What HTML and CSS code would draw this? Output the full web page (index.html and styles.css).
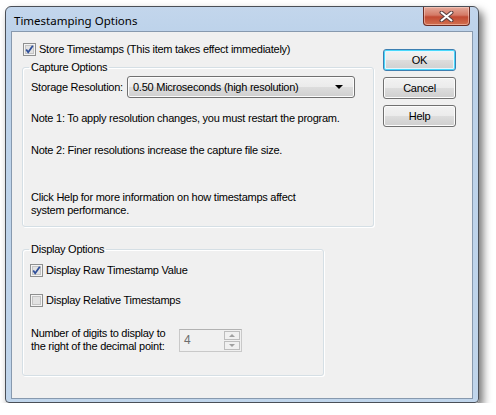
FILE: index.html
```html
<!DOCTYPE html>
<html lang="en">

<head>
    <meta charset="UTF-8">
    <meta name="viewport" content="width=device-width, initial-scale=1.0">
    <title>Timestamping Options</title>
    <link rel="stylesheet" href="styles.css">
</head>

<body>
    <div class="window">
        <div class="titlebar">
            <span class="title">Timestamping Options</span>
            <button class="close">
                <svg width="15" height="11" viewBox="0 0 15 11">
                    <path d="M2.5 1.5 L12.5 9.5 M12.5 1.5 L2.5 9.5" stroke="#5a4040" stroke-width="4" stroke-linecap="round" />
                    <path d="M2.5 1.5 L12.5 9.5 M12.5 1.5 L2.5 9.5" stroke="#ffffff" stroke-width="2" stroke-linecap="round" />
                </svg>
            </button>
        </div>
        <div class="client">
            <div class="main">
                <label class="check top-check">
                    <span class="box">
                        <svg width="13" height="13" viewBox="0 0 13 13">
                            <rect x="0.5" y="0.5" width="12" height="12" fill="#f4f4f4" stroke="#8e8f8f" />
                            <rect x="2.5" y="2.5" width="8" height="8" fill="#e2e2e2" stroke="#c4c4c4" />
                            <path d="M3.2 6.4 L5.2 9.2 L9.8 2.8" fill="none" stroke="#2f4f9a" stroke-width="1.8" />
                        </svg>
                    </span>
                    Store Timestamps (This item takes effect immediately)
                </label>

                <fieldset class="group capture">
                    <legend>Capture Options</legend>
                    <div class="row">
                        <span class="label">Storage Resolution:</span>
                        <div class="combo">
                            <span>0.50 Microseconds (high resolution)</span>
                            <span class="arrow"></span>
                        </div>
                    </div>
                    <p class="note1">Note 1: To apply resolution changes, you must restart the program.</p>
                    <p class="note2">Note 2: Finer resolutions increase the capture file size.</p>
                    <p class="note3">Click Help for more information on how timestamps affect<br>system performance.</p>
                </fieldset>

                <fieldset class="group display">
                    <legend>Display Options</legend>
                    <label class="check">
                        <span class="box">
                            <svg width="13" height="13" viewBox="0 0 13 13">
                                <rect x="0.5" y="0.5" width="12" height="12" fill="#f4f4f4" stroke="#8e8f8f" />
                                <rect x="2.5" y="2.5" width="8" height="8" fill="#e2e2e2" stroke="#c4c4c4" />
                                <path d="M3.2 6.4 L5.2 9.2 L9.8 2.8" fill="none" stroke="#2f4f9a" stroke-width="1.8" />
                            </svg>
                        </span>
                        Display Raw Timestamp Value
                    </label>
                    <label class="check second">
                        <span class="box">
                            <svg width="13" height="13" viewBox="0 0 13 13">
                                <rect x="0.5" y="0.5" width="12" height="12" fill="#f4f4f4" stroke="#8e8f8f" />
                                <rect x="2.5" y="2.5" width="8" height="8" fill="#e2e2e2" stroke="#c4c4c4" />
                            </svg>
                        </span>
                        Display Relative Timestamps
                    </label>
                    <div class="digits">
                        <p>Number of digits to display to<br>the right of the decimal point:</p>
                        <div class="spin">
                            <span class="value">4</span>
                            <div class="spin-buttons">
                                <span class="up"></span>
                                <span class="down"></span>
                            </div>
                        </div>
                    </div>
                </fieldset>
            </div>

            <div class="buttons">
                <button class="btn default">OK</button>
                <button class="btn">Cancel</button>
                <button class="btn">Help</button>
            </div>
        </div>
    </div>
</body>

</html>
```

FILE: styles.css
```css
* {
    padding: 0;
    margin: 0;
    box-sizing: border-box;
}

body {
    background: #ffffff;
    font-family: "Liberation Sans", Arial, sans-serif;
    font-size: 11px;
    line-height: 13px;
    letter-spacing: -0.25px;
    color: #000;
}

.window {
    width: 474px;
    height: 397px;
    margin: 6px 0 0 5px;
    border: 1px solid #4a4f57;
    border-radius: 6px 6px 4px 4px;
    background: linear-gradient(#c3d6ec, #bcd2ea 30px, #c0d5eb);
    padding: 0 5px 3px 5px;
    box-shadow: 4px 5px 9px rgba(0, 0, 0, 0.55);
    display: flex;
    flex-direction: column;
}

.titlebar {
    height: 24px;
    display: flex;
    justify-content: space-between;
    align-items: flex-start;
}

.title {
    font-family: "Noto Sans", sans-serif;
    font-size: 11.5px;
    letter-spacing: 0;
    line-height: 16px;
    margin: 6px 0 0 3px;
}

.close {
    width: 47px;
    height: 19px;
    margin-right: 3px;
    border: 1px solid #6b2c24;
    border-top: none;
    border-radius: 0 0 4px 4px;
    background: linear-gradient(#e5a99a, #d47a66 45%, #c24a33 55%, #d2704f);
    box-shadow: inset 0 0 0 1px rgba(255, 220, 210, 0.5);
    display: flex;
    align-items: center;
    justify-content: center;
}

.client {
    flex: 1;
    border: 1px solid #8799ae;
    background: #f0f0f0;
    display: flex;
    padding: 11px 0 0 10px;
}

.main {
    width: 352px;
}

.check {
    display: flex;
    align-items: center;
    height: 13px;
    gap: 3px;
}

.check .box {
    width: 13px;
    height: 13px;
    display: block;
}

.check .box svg {
    display: block;
}

.top-check {
    margin-left: 1px;
}

.group {
    border: 1px solid #d5dfe5;
    border-radius: 3px;
    padding: 0 8px;
    box-shadow: inset 1px 1px 0 #fff, 1px 1px 0 #fff;
}

.group legend {
    margin-left: -2px;
    padding: 0 2px;
}

.capture {
    margin-top: 5px;
    height: 166px;
    padding-top: 2px;
}

.row {
    display: flex;
    align-items: center;
    height: 22px;
}

.row .label {
    flex: 0 0 96px;
    white-space: nowrap;
}

.combo {
    width: 228px;
    height: 22px;
    border: 1px solid #707070;
    border-radius: 3px;
    background: linear-gradient(#f2f2f2, #ebebeb 50%, #dddddd 50%, #cfcfcf);
    box-shadow: inset 0 0 0 1px #fcfcfc;
    display: flex;
    align-items: center;
    justify-content: space-between;
    padding: 0 11px 0 5px;
}

.arrow {
    width: 0;
    height: 0;
    border-left: 4px solid transparent;
    border-right: 4px solid transparent;
    border-top: 4px solid #000;
}

.note1 {
    margin-top: 14px;
}

.note2 {
    margin-top: 19px;
}

.note3 {
    margin-top: 34px;
}

.display {
    width: 302px;
    height: 133px;
    margin-top: 16px;
    padding: 8px 8px 0 7px;
}

.display legend {
    margin-left: -1px;
}

.display .second {
    margin-top: 17px;
}

.digits {
    display: flex;
    align-items: center;
    margin-top: 20px;
    padding-left: 1px;
}

.digits p {
    width: 148px;
}

.spin {
    width: 63px;
    height: 23px;
    border: 1px solid #c9c9c9;
    border-top-color: #b2b2b2;
    background: #f0f0f0;
    display: flex;
    justify-content: space-between;
    padding: 1px;
}

.spin .value {
    color: #6d6d6d;
    font-size: 12px;
    padding: 3px 0 0 3px;
}

.spin-buttons {
    width: 16px;
    display: flex;
    flex-direction: column;
    gap: 1px;
}

.spin-buttons span {
    flex: 1;
    border: 1px solid #bdbdbd;
    background: #f0f0f0;
    display: flex;
    align-items: center;
    justify-content: center;
}

.spin-buttons span::after {
    content: "";
    border-left: 3px solid transparent;
    border-right: 3px solid transparent;
}

.spin-buttons .up::after {
    border-bottom: 3px solid #a0a0a0;
}

.spin-buttons .down::after {
    border-top: 3px solid #a0a0a0;
}

.buttons {
    margin-left: 9px;
    padding-top: 6px;
    display: flex;
    flex-direction: column;
    gap: 6px;
}

.btn {
    width: 73px;
    height: 22px;
    font-family: "Liberation Sans", Arial, sans-serif;
    font-size: 11px;
    letter-spacing: -0.25px;
    color: #000;
    border: 1px solid #707070;
    border-radius: 3px;
    background: linear-gradient(#f2f2f2, #ebebeb 50%, #dddddd 50%, #cfcfcf);
    box-shadow: inset 0 0 0 1px #fcfcfc;
}

.btn.default {
    border-color: #3c7fb1;
    box-shadow: inset 0 0 0 1px #48d8fb, inset 0 0 0 2px #e6f6fd;
}
```
